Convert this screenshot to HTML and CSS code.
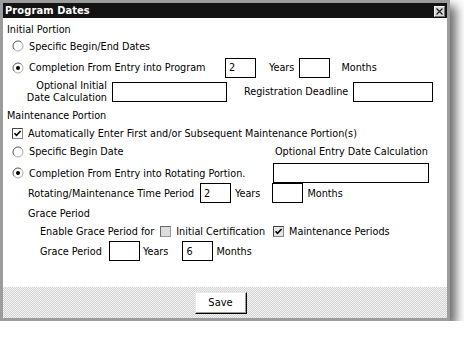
FILE: index.html
```html
<!DOCTYPE html>
<html>
<head>
<meta charset="utf-8">
<link rel="stylesheet" href="styles.css">
</head>
<body>
<div class="window">
  <div class="titlebar">
    <span class="title">Program Dates</span>
    <span class="close"><svg width="9" height="9" viewBox="0 0 9 9"><path d="M1.5 1.5 L7.5 7.5 M7.5 1.5 L1.5 7.5" stroke="#222" stroke-width="1.3"/></svg></span>
  </div>
  <div class="body">
    <div class="row sec r-a">Initial Portion</div>

    <div class="row ind r-b">
      <span class="radio"><svg width="12" height="12" viewBox="0 0 12 12"><circle cx="6" cy="6" r="5" fill="#fff"/><path d="M2.46 9.54 A5 5 0 0 1 9.54 2.46" fill="none" stroke="#555" stroke-width="1"/><path d="M9.54 2.46 A5 5 0 0 1 2.46 9.54" fill="none" stroke="#aaa" stroke-width="1"/></svg></span>
      <span class="lbl">Specific Begin/End Dates</span>
    </div>

    <div class="row ind r-c">
      <span class="cell w213">
        <span class="radio"><svg width="12" height="12" viewBox="0 0 12 12"><circle cx="6" cy="6" r="5" fill="#fff"/><path d="M2.46 9.54 A5 5 0 0 1 9.54 2.46" fill="none" stroke="#555" stroke-width="1"/><path d="M9.54 2.46 A5 5 0 0 1 2.46 9.54" fill="none" stroke="#aaa" stroke-width="1"/><circle cx="6" cy="6" r="2" fill="#000"/></svg></span>
        <span class="lbl">Completion From Entry into Program</span>
      </span>
      <input class="box small" value="2">
      <span class="txt ml13">Years</span>
      <input class="box small ml5" value="">
      <span class="txt ml11">Months</span>
    </div>

    <div class="row ind r-d">
      <span class="two">Optional Initial<br>Date Calculation</span>
      <input class="box med ml5" value="">
      <span class="txt ml17">Registration Deadline</span>
      <input class="box reg ml5" value="">
    </div>

    <div class="row sec r-e">Maintenance Portion</div>

    <div class="row ind r-f">
      <span class="check"><svg width="11" height="11" viewBox="0 0 11 11"><rect x="0.5" y="0.5" width="10" height="10" fill="#fff" stroke="#888"/><path d="M0.5 10.5 V0.5 H10.5" fill="none" stroke="#444"/><path d="M2.5 5.2 L4.5 7.4 L8.6 3" fill="none" stroke="#000" stroke-width="1.6"/></svg></span>
      <span class="lbl">Automatically Enter First and/or Subsequent Maintenance Portion(s)</span>
    </div>

    <div class="row ind r-g">
      <span class="cell w263">
        <span class="radio"><svg width="12" height="12" viewBox="0 0 12 12"><circle cx="6" cy="6" r="5" fill="#fff"/><path d="M2.46 9.54 A5 5 0 0 1 9.54 2.46" fill="none" stroke="#555" stroke-width="1"/><path d="M9.54 2.46 A5 5 0 0 1 2.46 9.54" fill="none" stroke="#aaa" stroke-width="1"/></svg></span>
        <span class="lbl">Specific Begin Date</span>
      </span>
      <span class="txt">Optional Entry Date Calculation</span>
    </div>

    <div class="row ind r-h">
      <span class="cell w261">
        <span class="radio"><svg width="12" height="12" viewBox="0 0 12 12"><circle cx="6" cy="6" r="5" fill="#fff"/><path d="M2.46 9.54 A5 5 0 0 1 9.54 2.46" fill="none" stroke="#555" stroke-width="1"/><path d="M9.54 2.46 A5 5 0 0 1 2.46 9.54" fill="none" stroke="#aaa" stroke-width="1"/><circle cx="6" cy="6" r="2" fill="#000"/></svg></span>
        <span class="lbl">Completion From Entry into Rotating Portion.</span>
      </span>
      <input class="box wide" value="">
    </div>

    <div class="row sub r-i">
      <span class="cell w172">Rotating/Maintenance Time Period</span>
      <input class="box small" value="2">
      <span class="txt ml4">Years</span>
      <input class="box small ml12" value="">
      <span class="txt ml4">Months</span>
    </div>

    <div class="row sub r-j">Grace Period</div>

    <div class="row sub2 r-k">
      <span class="txt">Enable Grace Period for</span>
      <span class="check ml6"><svg width="11" height="11" viewBox="0 0 11 11"><rect x="0.5" y="0.5" width="10" height="10" fill="#dcdcdc" stroke="#999"/><path d="M0.5 10.5 V0.5 H10.5" fill="none" stroke="#666"/></svg></span>
      <span class="txt ml5">Initial Certification</span>
      <span class="check ml8"><svg width="11" height="11" viewBox="0 0 11 11"><rect x="0.5" y="0.5" width="10" height="10" fill="#e6e6e6" stroke="#888"/><path d="M0.5 10.5 V0.5 H10.5" fill="none" stroke="#444"/><path d="M2.5 5.2 L4.5 7.4 L8.6 3" fill="none" stroke="#000" stroke-width="1.6"/></svg></span>
      <span class="txt ml5">Maintenance Periods</span>
    </div>

    <div class="row sub2 r-l">
      <span class="cell w69">Grace Period</span>
      <input class="box small" value="">
      <span class="txt ml3">Years</span>
      <input class="box small ml14" value="6">
      <span class="txt ml3">Months</span>
    </div>
  </div>
  <div class="footer">
    <button class="btn">Save</button>
  </div>
</div>
</body>
</html>
```

FILE: styles.css
```css
html, body {
  margin: 0;
  padding: 0;
  background: #fff;
}
body {
  font-family: "DejaVu Sans Condensed", "DejaVu Sans", sans-serif;
  font-stretch: semi-condensed;
  font-size: 10.75px;
  color: #000;
}
.window {
  width: 450px;
  height: 321px;
  box-sizing: border-box;
  border: 3px solid #9c9c9c;
  background: #fff;
  display: flex;
  flex-direction: column;
  box-shadow: 6px 6px 10px rgba(0, 0, 0, 0.6);
}
.titlebar {
  height: 15px;
  background: #131313;
  display: flex;
  align-items: center;
  justify-content: space-between;
  padding: 0 2px 0 2px;
  flex: none;
}
.title {
  color: #fff;
  font-weight: bold;
  font-size: 11px;
  letter-spacing: 0.1px;
}
.close {
  width: 11px;
  height: 11px;
  box-sizing: border-box;
  background: #d8d8d8;
  border: 1px solid;
  border-color: #f4f4f4 #707070 #707070 #f4f4f4;
  display: flex;
  align-items: center;
  justify-content: center;
  margin-top: 1px;
}
.close svg { display: block; }
.body {
  flex: 1;
  padding: 3px 0 0 4px;
}
.row {
  display: flex;
  align-items: center;
  white-space: nowrap;
}
.ind { padding-left: 5px; }
.sub { padding-left: 21px; }
.sub2 { padding-left: 33px; }
.r-a { height: 16px; }
.r-b { height: 18px; }
.r-c { height: 21px; margin-top: 2px; }
.r-d { height: 27px; }
.r-e { height: 21px; }
.r-f { height: 14px; }
.r-g { height: 23px; }
.r-h { height: 20px; }
.r-i { height: 20px; }
.r-j { height: 21px; }
.r-k { height: 14px; }
.r-l { height: 20px; margin-top: 3px; }
.cell {
  display: flex;
  align-items: center;
  flex: none;
}
.w213 { width: 213px; }
.w263 { width: 263px; }
.w261 { width: 261px; }
.w172 { width: 172px; }
.w69 { width: 69px; }
.radio, .check {
  display: inline-flex;
  flex: none;
}
.radio svg, .check svg { display: block; }
.lbl { margin-left: 5px; }
.two {
  width: 95px;
  text-align: right;
  line-height: 12px;
  flex: none;
}
.box {
  box-sizing: border-box;
  height: 20px;
  border: 1px solid #000;
  padding: 0 3px;
  margin: 0;
  font: inherit;
  background: #fff;
  color: #000;
  outline: none;
  flex: none;
}
.small { width: 31px; }
.med { width: 115px; }
.reg { width: 80px; }
.wide { width: 156px; }
.ml3 { margin-left: 3px; }
.ml4 { margin-left: 4px; }
.ml5 { margin-left: 5px; }
.ml6 { margin-left: 6px; }
.ml8 { margin-left: 8px; }
.ml11 { margin-left: 11px; }
.ml12 { margin-left: 12px; }
.ml13 { margin-left: 13px; }
.ml14 { margin-left: 14px; }
.ml17 { margin-left: 17px; }
.footer {
  height: 31px;
  flex: none;
  display: flex;
  align-items: center;
  justify-content: center;
  padding-right: 9px;
  background-color: #f2f2f2;
  background-image: conic-gradient(#d4d4d4 25%, #f2f2f2 0 50%, #d4d4d4 0 75%, #f2f2f2 0);
  background-size: 2px 2px;
}
.btn {
  width: 52px;
  height: 22px;
  box-sizing: border-box;
  background: #fff;
  border: 1px solid;
  border-color: #e8e8e8 #000 #000 #e8e8e8;
  box-shadow: inset -1px -1px 0 #9a9a9a;
  font: inherit;
  font-size: 11px;
  color: #000;
  padding: 0;
}
```
